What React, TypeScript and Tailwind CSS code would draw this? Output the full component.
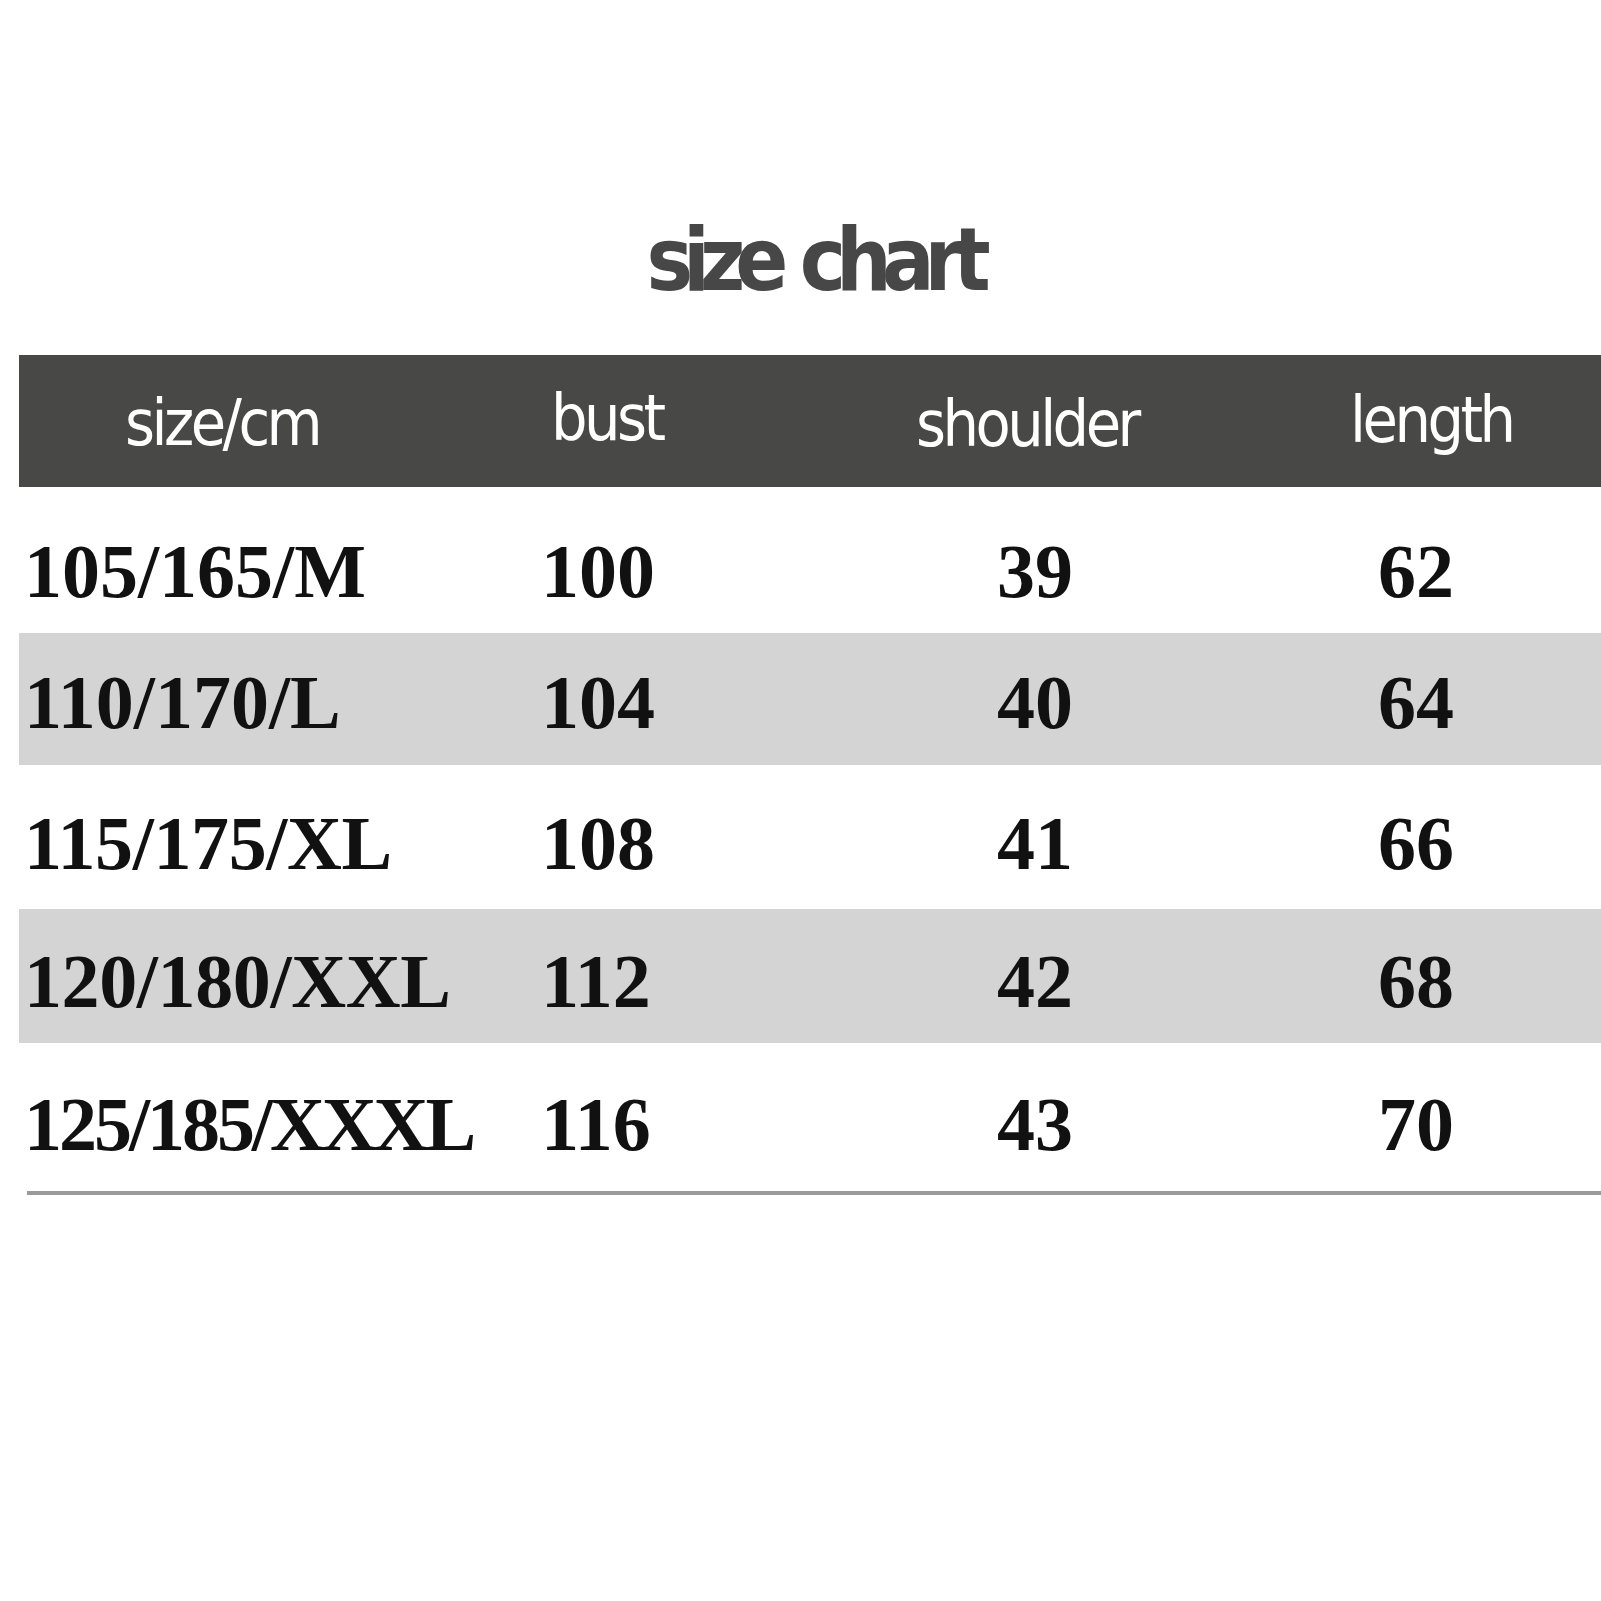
const rows = [
  { size: "105/165/M", bust: "100", shoulder: "39", length: "62", grey: false, h: "h-[146px]", pt: "pt-[22px]", track: "tracking-normal" },
  { size: "110/170/L", bust: "104", shoulder: "40", length: "64", grey: true, h: "h-[132px]", pt: "pt-[5px]", track: "tracking-normal" },
  { size: "115/175/XL", bust: "108", shoulder: "41", length: "66", grey: false, h: "h-[144px]", pt: "pt-[11px]", track: "tracking-[-0.005em]" },
  { size: "120/180/XXL", bust: "112", shoulder: "42", length: "68", grey: true, h: "h-[134px]", pt: "pt-[9px]", track: "tracking-[-0.005em]" },
  { size: "125/185/XXXL", bust: "116", shoulder: "43", length: "70", grey: false, h: "h-[148px]", pt: "pt-[13px]", track: "tracking-[-0.04em]" },
];

const sans = "font-['DejaVu_Sans_Condensed','DejaVu_Sans',sans-serif]";
const serif = "font-['Liberation_Serif','Times_New_Roman',serif]";

export default function App() {
  return (
    <main className="w-[1601px] h-[1601px] bg-white overflow-hidden">
      {/* Title */}
      <div className="pt-[208px] pl-[26px] flex justify-center">
        <h1
          className={`${sans} font-bold text-[87px] leading-[104px] tracking-[-0.115em] [word-spacing:4px] text-[#474747]`}
        >
          size chart
        </h1>
      </div>

      {/* Table */}
      <div className="mt-[43px] ml-[19px]">
        {/* Header */}
        <div
          className={`${sans} grid grid-cols-[522px_345px_400px_1fr] items-center h-[132px] bg-[#484846] text-white text-[64px] leading-none tracking-[-0.055em]`}
        >
          <span className="pl-[106px] pt-[3px]">size/cm</span>
          <span className="pl-[10px] pb-[6px]">bust</span>
          <span className="pl-[30px] pt-[6px]">shoulder</span>
          <span className="pl-[64px] pb-[2px]">length</span>
        </div>

        {/* Rows */}
        {rows.map((r) => (
          <div
            key={r.size}
            className={`${serif} grid grid-cols-[522px_345px_400px_1fr] items-center ${r.h} ${r.pt} ${
              r.grey ? "bg-[#d4d4d4]" : "bg-white"
            } text-[#111] font-bold text-[76px] leading-none`}
          >
            <span className={`pl-[5px] ${r.track}`}>{r.size}</span>
            <span>{r.bust}</span>
            <span className="pl-[111px]">{r.shoulder}</span>
            <span className="pl-[92px]">{r.length}</span>
          </div>
        ))}

        {/* Bottom rule */}
        <div className="ml-[8px] h-[4px] bg-[#9a9a9a]" />
      </div>
    </main>
  );
}
